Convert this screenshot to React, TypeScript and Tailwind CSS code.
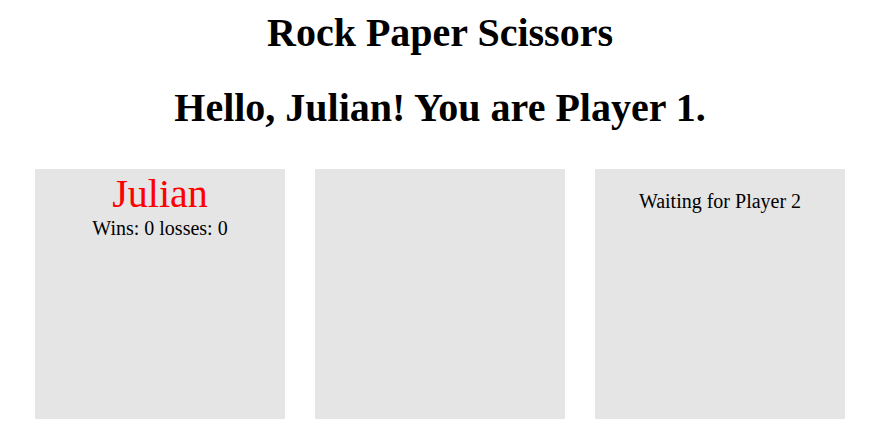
export default function App() {
  return (
    <div className="w-[880px] bg-white text-black" style={{ fontFamily: '"Liberation Serif", "Times New Roman", serif' }}>
      <h1 className="text-center text-[40px] font-bold leading-none pt-[13px]">
        Rock Paper Scissors
      </h1>
      <h2 className="text-center text-[40px] font-bold leading-none mt-[35px]">
        Hello, Julian! You are Player 1.
      </h2>

      <div className="flex justify-center gap-[30px] mt-[41px]">
        <div className="w-[250px] h-[250px] bg-[#e5e5e5] flex flex-col items-center">
          <div className="text-[40px] text-[#ff0000] leading-none mt-[5px]">Julian</div>
          <div className="text-[20px] leading-none mt-[4px]">Wins: 0 losses: 0</div>
        </div>
        <div className="w-[250px] h-[250px] bg-[#e5e5e5]"></div>
        <div className="w-[250px] h-[250px] bg-[#e5e5e5] flex flex-col items-center">
          <div className="text-[20px] leading-none mt-[22px]">Waiting for Player 2</div>
        </div>
      </div>
    </div>
  );
}
